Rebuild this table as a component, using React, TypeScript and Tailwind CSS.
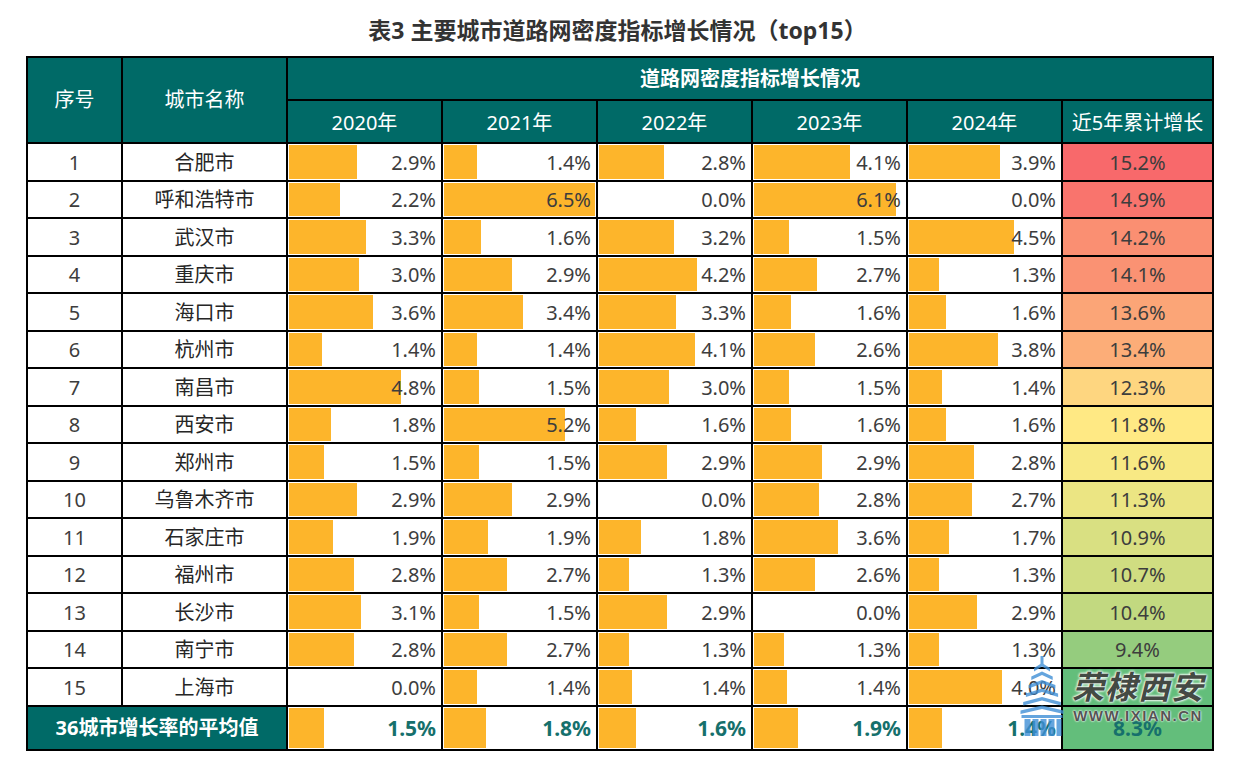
import React from 'react';

type Row = [number, string, number, number, number, number, number, number | null];

const ROWS: Row[] = [
  [1, '合肥市', 2.9, 1.4, 2.8, 4.1, 3.9, 15.2],
  [2, '呼和浩特市', 2.2, 6.5, 0.0, 6.1, 0.0, 14.9],
  [3, '武汉市', 3.3, 1.6, 3.2, 1.5, 4.5, 14.2],
  [4, '重庆市', 3.0, 2.9, 4.2, 2.7, 1.3, 14.1],
  [5, '海口市', 3.6, 3.4, 3.3, 1.6, 1.6, 13.6],
  [6, '杭州市', 1.4, 1.4, 4.1, 2.6, 3.8, 13.4],
  [7, '南昌市', 4.8, 1.5, 3.0, 1.5, 1.4, 12.3],
  [8, '西安市', 1.8, 5.2, 1.6, 1.6, 1.6, 11.8],
  [9, '郑州市', 1.5, 1.5, 2.9, 2.9, 2.8, 11.6],
  [10, '乌鲁木齐市', 2.9, 2.9, 0.0, 2.8, 2.7, 11.3],
  [11, '石家庄市', 1.9, 1.9, 1.8, 3.6, 1.7, 10.9],
  [12, '福州市', 2.8, 2.7, 1.3, 2.6, 1.3, 10.7],
  [13, '长沙市', 3.1, 1.5, 2.9, 0.0, 2.9, 10.4],
  [14, '南宁市', 2.8, 2.7, 1.3, 1.3, 1.3, 9.4],
  // cumulative value of row 15 sits under the watermark
  [15, '上海市', 0.0, 1.4, 1.4, 1.4, 4.0, null],
];

const AVG = [1.5, 1.8, 1.6, 1.9, 1.4];
const YEARS = ['2020年', '2021年', '2022年', '2023年', '2024年'];
const PX_PER_PCT = 23.3;

// excel style 3-colour scale: green -> yellow -> red
const mix = (a: number[], b: number[], t: number) =>
  `rgb(${a.map((v, i) => Math.round(v + (b[i] - v) * t)).join(',')})`;
const RED = [248, 105, 107];
const YELLOW = [255, 235, 132];
const GREEN = [99, 190, 123];
const scaleColor = (v: number) => {
  const min = 8.3, mid = 11.75, max = 15.2;
  if (v >= mid) return mix(YELLOW, RED, Math.min(1, (v - mid) / (max - mid)));
  return mix(YELLOW, GREEN, Math.min(1, (mid - v) / (mid - min)));
};

const fmt = (v: number) => `${v.toFixed(1)}%`;

const BarCell = ({ value, bold = false }: { value: number; bold?: boolean }) => (
  <div className="relative bg-white flex items-center justify-end pr-[5px] pt-[2px]">
    <div
      className="absolute left-px top-px bottom-px bg-[#FDB52B]"
      style={{ width: Math.min(151, value * PX_PER_PCT) }}
    />
    <span
      className={
        bold
          ? 'relative text-[21px] font-bold text-[#16706C]'
          : 'relative text-[20px] text-[#3d3d3d]'
      }
    >
      {fmt(value)}
    </span>
  </div>
);

const Tower = () => (
  <svg viewBox="0 0 45 80" className="w-[46px] h-[80px]">
    <g fill="#3f8fd6" opacity="0.8">
      <rect x="21" y="0" width="3" height="8" />
      {[0, 1, 2, 3, 4, 5].map((i) => {
        const y = 7 + i * 8.5;
        const hw = 8 + i * 2.7;
        const cx = 22.5;
        return (
          <polygon
            key={i}
            points={`${cx},${y} ${cx + hw},${y + 5} ${cx + hw},${y + 8.5} ${cx},${y + 3.5} ${cx - hw},${y + 8.5} ${cx - hw},${y + 5}`}
          />
        );
      })}
      <rect x="2" y="59" width="41" height="3" />
      <rect x="5" y="63" width="6" height="17" />
      <rect x="13" y="63" width="6" height="17" />
      <rect x="21" y="63" width="6" height="17" />
      <rect x="29" y="63" width="6" height="17" />
      <rect x="37" y="63" width="5" height="17" />
    </g>
  </svg>
);

export default function App() {
  return (
    <div
      className="relative w-[1235px] h-[765px] bg-white overflow-hidden"
      style={{ fontFamily: '"Noto Sans", "Noto Sans CJK SC", sans-serif' }}
    >
      <div className="h-[56px] flex items-center justify-center pt-1">
        <h1 className="text-[23px] font-bold text-[#333333]">
          表3 主要城市道路网密度指标增长情况（top15）
        </h1>
      </div>

      <div className="ml-[26px] w-[1188px] grid grid-cols-[93px_163px_153px_153px_153px_153px_153px_149px] grid-rows-[41px_41px_repeat(15,35.5px)_42px] gap-[2px] p-[2px] bg-black">
        <div className="row-span-2 bg-[#006A67] text-white text-[20px] flex items-center justify-center">
          序号
        </div>
        <div className="row-span-2 bg-[#006A67] text-white text-[20px] flex items-center justify-center">
          城市名称
        </div>
        <div className="col-span-6 bg-[#006A67] text-white text-[20px] font-bold flex items-center justify-center">
          道路网密度指标增长情况
        </div>
        {YEARS.map((y) => (
          <div key={y} className="bg-[#006A67] text-white text-[20px] flex items-center justify-center pt-[2px]">
            {y}
          </div>
        ))}
        <div className="bg-[#006A67] text-white text-[20px] flex items-center justify-center pt-[2px]">
          近5年累计增长
        </div>

        {ROWS.map(([n, city, a, b, c, d, e, total]) => (
          <React.Fragment key={n}>
            <div className="bg-white text-[20px] text-[#3d3d3d] flex items-center justify-center pt-[2px]">{n}</div>
            <div className="bg-white text-[20px] text-[#262626] flex items-center justify-center pt-[2px]">{city}</div>
            {[a, b, c, d, e].map((v, i) => (
              <BarCell key={i} value={v} />
            ))}
            <div
              className="text-[20px] text-[#3d3d3d] flex items-center justify-center pt-[2px]"
              style={{ backgroundColor: scaleColor(total ?? 8.3) }}
            >
              {total === null ? '' : fmt(total)}
            </div>
          </React.Fragment>
        ))}

        <div className="col-span-2 bg-[#006A67] text-white text-[20px] font-bold flex items-center justify-center">
          36城市增长率的平均值
        </div>
        {AVG.map((v, i) => (
          <BarCell key={i} value={v} bold />
        ))}
        <div
          className="text-[21px] font-bold text-[#16706C] flex items-center justify-center pt-[2px]"
          style={{ backgroundColor: scaleColor(8.3) }}
        >
          8.3%
        </div>
      </div>

      {/* watermark */}
      <div className="absolute left-[1019px] top-[656px]">
        <Tower />
      </div>
      <div className="absolute left-[1072px] top-[667px] flex flex-col items-center">
        <span
          className="text-[32px] leading-[40px] font-bold italic text-[#444a44] tracking-[1px]"
          style={{ textShadow: '0 0 3px #fff, 0 0 3px #fff, 0 0 2px #fff' }}
        >
          荣棣西安
        </span>
        <span
          className="text-[15px] leading-[18px] font-bold text-[#555555] tracking-[1.5px]"
          style={{ fontFamily: '"Liberation Sans", sans-serif', textShadow: '0 0 2px #fff, 0 0 2px #fff' }}
        >
          WWW.IXIAN.CN
        </span>
      </div>
    </div>
  );
}
